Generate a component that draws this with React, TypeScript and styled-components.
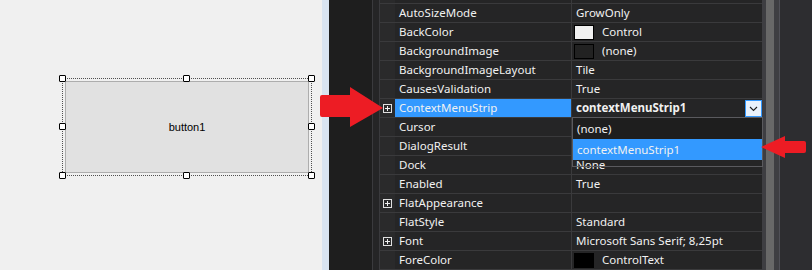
import React from "react";
import styled, { createGlobalStyle } from "styled-components";

const Global = createGlobalStyle`
  html, body { margin: 0; padding: 0; background: #2d2d30; }
  body { width: 812px; height: 270px; overflow: hidden; }
`;

const Page = styled.div`
  position: relative;
  display: flex;
  width: 812px;
  height: 270px;
  overflow: hidden;
  font-family: "Noto Sans", "Open Sans", sans-serif;
`;

const Designer = styled.div`
  width: 322px;
  flex: none;
  background: #f0f0f0;
  padding: 78px 0 0 62px;
  box-sizing: border-box;
`;

const SelectionFrame = styled.div`
  position: relative;
  width: 250px;
  height: 98px;
  box-sizing: border-box;
  border: 1px dotted #505050;
  padding: 2px;
`;

const FormButton = styled.div`
  width: 244px;
  height: 92px;
  box-sizing: border-box;
  background: #e1e1e1;
  border: 1px solid #adadad;
  display: flex;
  align-items: center;
  justify-content: center;
  font-family: "Liberation Sans", Arial, sans-serif;
  font-size: 11px;
  color: #000;
`;

const Handle = styled.div<{ $x: string; $y: string }>`
  position: absolute;
  left: ${(p) => p.$x};
  top: ${(p) => p.$y};
  width: 7px;
  height: 7px;
  margin: -4px 0 0 -4px;
  box-sizing: border-box;
  background: #fff;
  border: 1px solid #000;
  border-radius: 1px;
`;

const Strip = styled.div`
  width: 7px;
  flex: none;
  background: #d9e4f1;
`;

const DarkGutter = styled.div`
  width: 43px;
  flex: none;
  background: #1e1e1e;
  border-right: 1px solid #3a3a3d;
`;

const InnerGutter = styled.div`
  width: 6px;
  flex: none;
  background: #252526;
  border-right: 1px solid #3a3a3d;
`;

const Grid = styled.div`
  width: 382px;
  flex: none;
  display: flex;
  flex-direction: column;
  background: #252526;
`;

const Rows = styled.div`
  margin-top: -15px;
  display: flex;
  flex-direction: column;
`;

const Row = styled.div`
  display: flex;
  height: 19px;
  box-sizing: border-box;
  border-bottom: 1px solid #3a3a3c;
`;

const Margin = styled.div`
  width: 15px;
  flex: none;
  background: #2a2a2b;
  display: flex;
  align-items: center;
  padding-left: 3px;
  box-sizing: border-box;
`;

const Expander = styled.div`
  position: relative;
  width: 9px;
  height: 9px;
  box-sizing: border-box;
  border: 1px solid #e0e0e0;
  &::before {
    content: "";
    position: absolute;
    left: 1px;
    top: 3px;
    width: 5px;
    height: 1px;
    background: #f0f0f0;
  }
  &::after {
    content: "";
    position: absolute;
    left: 3px;
    top: 1px;
    width: 1px;
    height: 5px;
    background: #f0f0f0;
  }
`;

const NameCell = styled.div<{ $selected?: boolean }>`
  width: 177px;
  flex: none;
  box-sizing: border-box;
  padding-left: 4px;
  border-right: 1px solid #3a3a3c;
  background: ${(p) => (p.$selected ? "#3399ff" : "#252526")};
  color: #f1f1f1;
  font-size: 11.5px;
  line-height: 18px;
  white-space: nowrap;
  overflow: hidden;
`;

const ValueCell = styled.div<{ $bold?: boolean }>`
  flex: 1;
  display: flex;
  align-items: center;
  box-sizing: border-box;
  padding-left: 4px;
  color: #f1f1f1;
  font-size: 11.5px;
  font-weight: ${(p) => (p.$bold ? 700 : 400)};
  line-height: 18px;
  white-space: nowrap;
`;

const Swatch = styled.div<{ $color: string }>`
  width: 20px;
  height: 15px;
  margin-left: -2px;
  margin-right: 8px;
  box-sizing: border-box;
  background: ${(p) => p.$color};
  border: 1px solid #000;
`;

const DropButton = styled.div`
  margin-left: auto;
  width: 17px;
  height: 17px;
  margin-top: 1px;
  box-sizing: border-box;
  background: #e9f2fc;
  border: 1px solid #3399ff;
  display: flex;
  align-items: center;
  justify-content: center;
`;

const Scrollbar = styled.div`
  width: 18px;
  flex: none;
  box-sizing: border-box;
  background: #3e3e42;
  padding: 0 5px 0 4px;
  border-right: 1px solid #505057;
`;

const Thumb = styled.div`
  height: 100%;
  background: #686868;
`;

const RightEdge = styled.div`
  flex: 1;
  background: #2d2d30;
`;

const DropList = styled.div`
  position: absolute;
  left: 572px;
  top: 117px;
  width: 191px;
  height: 50px;
  box-sizing: border-box;
  border: 1px solid #5a5a5e;
  display: flex;
  flex-direction: column;
`;

const ListItem = styled.div<{ $active?: boolean }>`
  height: 21px;
  flex: none;
  padding-left: 4px;
  background: ${(p) => (p.$active ? "#3399ff" : "#1e1e1e")};
  color: #f1f1f1;
  font-size: 11.5px;
  line-height: 21px;
  white-space: nowrap;
`;

const Arrow = styled.svg`
  position: absolute;
  left: 0;
  top: 0;
  pointer-events: none;
`;

type Prop = {
  name: string;
  value: string;
  swatch?: string;
  expandable?: boolean;
  selected?: boolean;
};

const props: Prop[] = [
  { name: "", value: "" },
  { name: "AutoSizeMode", value: "GrowOnly" },
  { name: "BackColor", value: "Control", swatch: "#f0f0f0" },
  { name: "BackgroundImage", value: "(none)", swatch: "#222222" },
  { name: "BackgroundImageLayout", value: "Tile" },
  { name: "CausesValidation", value: "True" },
  { name: "ContextMenuStrip", value: "contextMenuStrip1", expandable: true, selected: true },
  { name: "Cursor", value: "" },
  { name: "DialogResult", value: "" },
  { name: "Dock", value: "None" },
  { name: "Enabled", value: "True" },
  { name: "FlatAppearance", value: "", expandable: true },
  { name: "FlatStyle", value: "Standard" },
  { name: "Font", value: "Microsoft Sans Serif; 8,25pt", expandable: true },
  { name: "ForeColor", value: "ControlText", swatch: "#000000" },
];

const handles: [string, string][] = [
  ["0px", "0px"],
  ["50%", "0px"],
  ["calc(100% + 1px)", "0px"],
  ["0px", "50%"],
  ["calc(100% + 1px)", "50%"],
  ["0px", "calc(100% + 1px)"],
  ["50%", "calc(100% + 1px)"],
  ["calc(100% + 1px)", "calc(100% + 1px)"],
];

export default function App() {
  return (
    <>
      <Global />
      <Page>
        <Designer>
          <SelectionFrame>
            <FormButton>button1</FormButton>
            {handles.map(([x, y], i) => (
              <Handle key={i} $x={x} $y={y} />
            ))}
          </SelectionFrame>
        </Designer>
        <Strip />
        <DarkGutter />
        <InnerGutter />
        <Grid>
          <Rows>
            {props.map((p, i) => (
              <Row key={i}>
                <Margin>{p.expandable && <Expander />}</Margin>
                <NameCell $selected={p.selected}>{p.name}</NameCell>
                <ValueCell $bold={p.selected}>
                  {p.swatch && <Swatch $color={p.swatch} />}
                  {p.value}
                  {p.selected && (
                    <DropButton>
                      <svg width="9" height="6" viewBox="0 0 9 6">
                        <path d="M1 1 L4.5 4.5 L8 1" fill="none" stroke="#1e1e1e" strokeWidth="1.1" />
                      </svg>
                    </DropButton>
                  )}
                </ValueCell>
              </Row>
            ))}
          </Rows>
        </Grid>
        <Scrollbar>
          <Thumb />
        </Scrollbar>
        <RightEdge />
        <DropList>
          <ListItem>(none)</ListItem>
          <ListItem $active>contextMenuStrip1</ListItem>
        </DropList>
        <Arrow width="812" height="270" viewBox="0 0 812 270">
          <path
            d="M322 95 L350 95 L350 87 L383 108 L350 127 L350 117 L322 117 Q320 117 320 115 L320 97 Q320 95 322 95 Z"
            fill="#ed1c24"
          />
          <path
            d="M804 141 L785 141 L785 136 L761 147 L785 158 L785 153 L804 153 Q806 153 806 151 L806 143 Q806 141 804 141 Z"
            fill="#ed1c24"
          />
        </Arrow>
      </Page>
    </>
  );
}
